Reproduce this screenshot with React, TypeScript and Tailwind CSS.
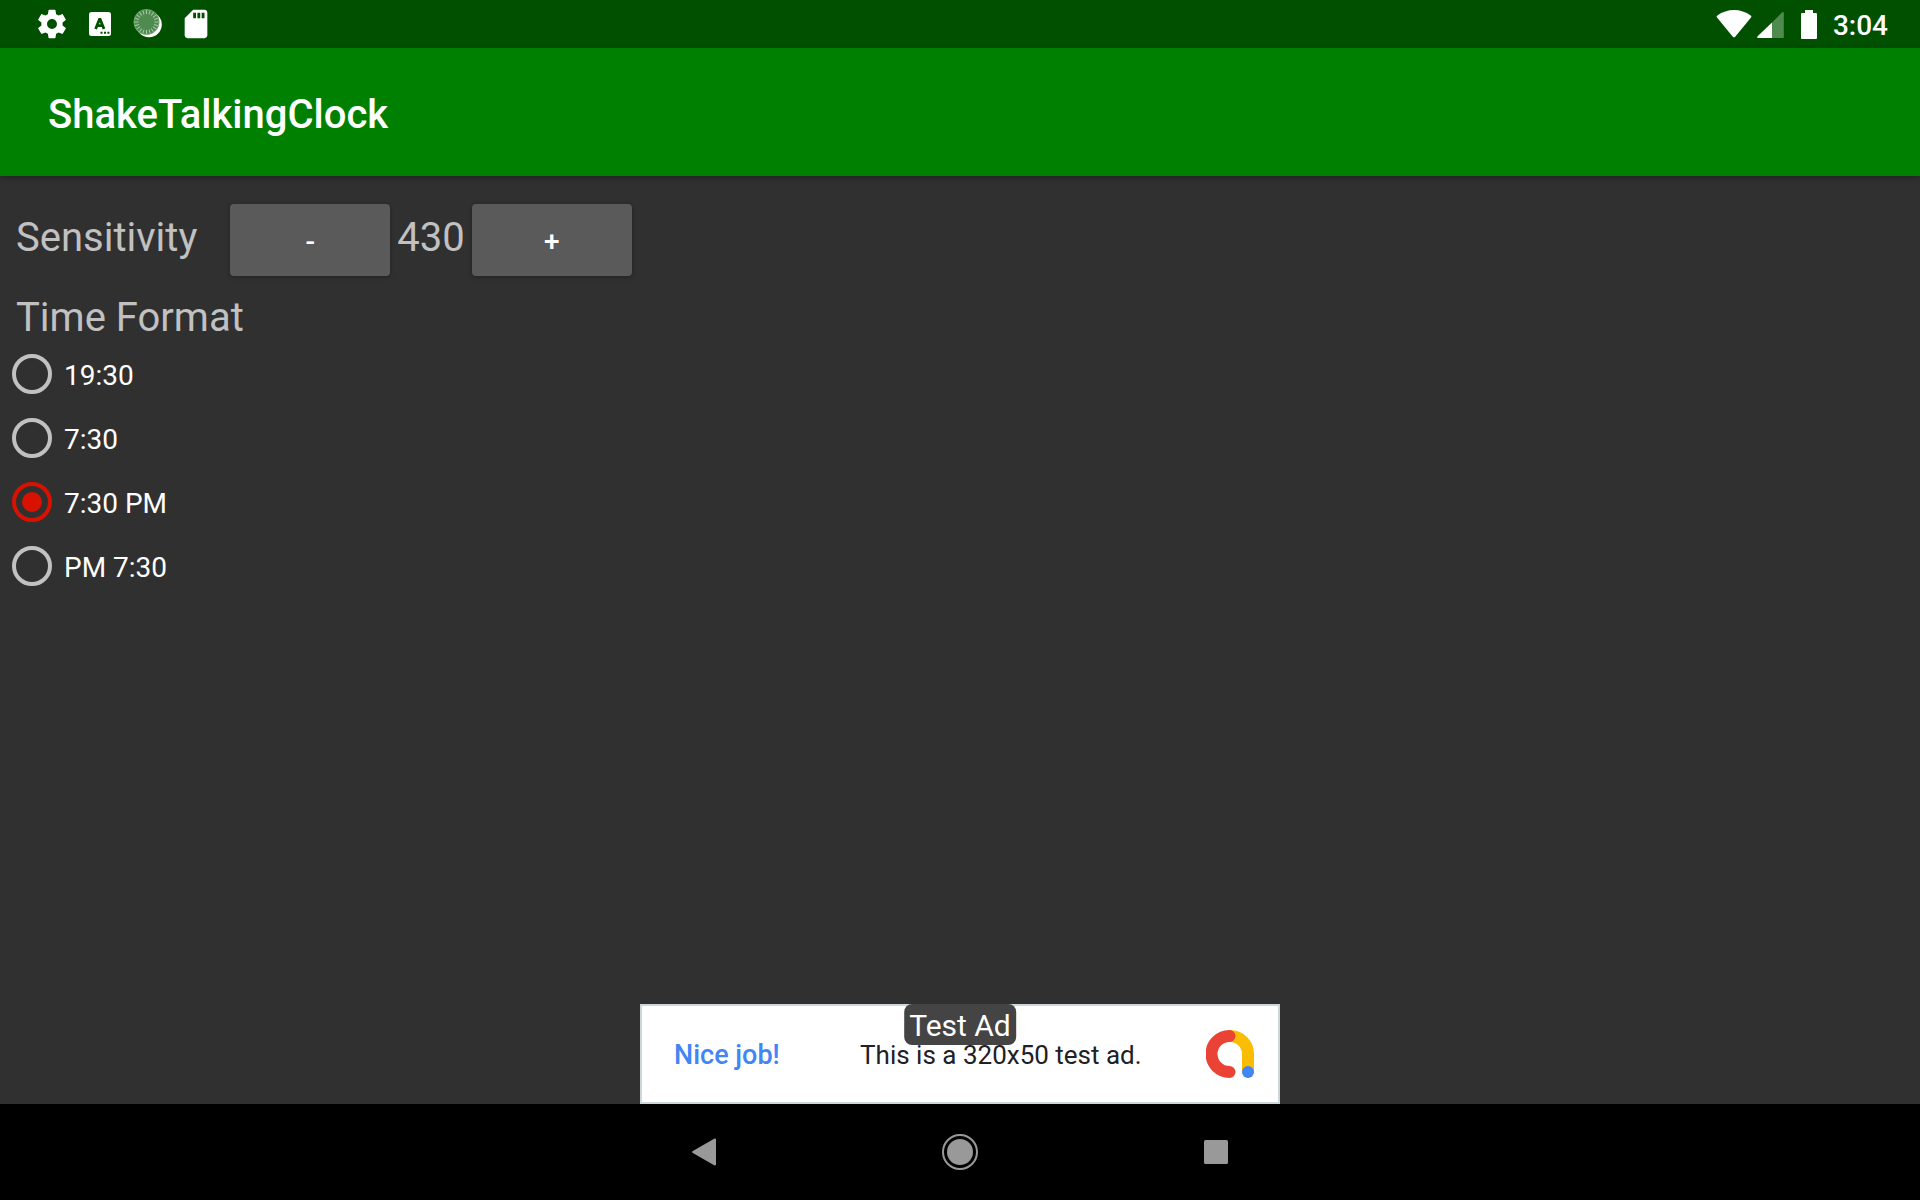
import React, { useState } from "react";

const MIN_SENSITIVITY = 0;
const SENSITIVITY_STEP = 10;

const timeFormats = ["19:30", "7:30", "7:30 PM", "PM 7:30"];

// Tick marks around the sync spinner
const spokes = Array.from({ length: 20 }, (_, i) => i * 18);

const StatusBar = () => (
  <header className="flex h-12 items-center justify-between bg-[#005000] pr-8 pl-[35px] text-white">
    <div className="flex items-center gap-[14px]">
      <svg className="size-[34px]" viewBox="0 0 24 24" fill="currentColor" aria-hidden="true">
        <path d="M19.43 12.98c.04-.32.07-.64.07-.98s-.03-.66-.07-.98l2.11-1.65c.19-.15.24-.42.12-.64l-2-3.46c-.12-.22-.39-.3-.61-.22l-2.49 1c-.52-.4-1.08-.73-1.69-.98l-.38-2.65C14.46 2.18 14.25 2 14 2h-4c-.25 0-.46.18-.49.42l-.38 2.65c-.61.25-1.17.59-1.69.98l-2.49-1c-.23-.09-.49 0-.61.22l-2 3.46c-.13.22-.07.49.12.64l2.11 1.65c-.04.32-.07.65-.07.98s.03.66.07.98l-2.11 1.65c-.19.15-.24.42-.12.64l2 3.46c.12.22.39.3.61.22l2.49-1c.52.4 1.08.73 1.69.98l.38 2.65c.03.24.24.42.49.42h4c.25 0 .46-.18.49-.42l.38-2.65c.61-.25 1.17-.59 1.69-.98l2.49 1c.23.09.49 0 .61-.22l2-3.46c.12-.22.07-.49-.12-.64l-2.11-1.65zM12 15.5c-1.93 0-3.5-1.57-3.5-3.5s1.57-3.5 3.5-3.5 3.5 1.57 3.5 3.5-1.57 3.5-3.5 3.5z" />
      </svg>
      <svg className="size-[34px]" viewBox="0 0 34 34" aria-hidden="true">
        <rect x="6" y="5" width="22" height="24" rx="2.5" fill="currentColor" />
        <path
          d="M12.6 22 16.8 11.5 21 22M14.3 18.6h5"
          fill="none"
          stroke="#005000"
          strokeWidth="2.8"
          strokeLinejoin="bevel"
        />
        <path d="M17.5 24.8h2v2h-2zM21 24.8h2v2h-2zM24.4 24.8h2v2h-2z" fill="#005000" />
      </svg>
      <svg className="size-[34px]" viewBox="0 0 34 34" aria-hidden="true">
        <circle cx="18" cy="17.5" r="12.8" fill="#fff" />
        <circle cx="15.5" cy="15" r="12.8" fill="#4f8a4f" />
        {spokes.map((angle) => (
          <path
            key={angle}
            d="M15.5 3v4"
            stroke="#a9c9a9"
            strokeWidth="1"
            transform={`rotate(${angle} 15.5 15)`}
          />
        ))}
        <circle cx="15.5" cy="15" r="12.6" fill="none" stroke="#8fb88f" strokeWidth=".6" />
      </svg>
      <svg className="size-[34px]" viewBox="0 0 24 24" fill="currentColor" aria-hidden="true">
        <path d="M18 2h-8L4.02 8 4 20c0 1.1.9 2 2 2h12c1.1 0 2-.9 2-2V4c0-1.1-.9-2-2-2zm-6 6h-2V4h2v4zm3 0h-2V4h2v4zm3 0h-2V4h2v4z" />
      </svg>
    </div>

    <div className="flex items-center">
      <svg className="h-7 w-9" viewBox="0 0 36 28" fill="currentColor" aria-hidden="true">
        <path d="M18 27.3a1.6 1.6 0 0 0 1.2-.6L35 7.4c.6-.8.5-1.4-.3-2C29.8 2 24 0 18 0S6.2 2 1.3 5.4c-.8.6-.9 1.2-.3 2l15.8 19.3a1.6 1.6 0 0 0 1.2.6z" />
      </svg>
      <svg className="ml-1 h-7 w-7" viewBox="0 0 28 28" aria-hidden="true">
        <path d="M16 12.6V28H2.5c-1.3 0-1.7-1-.9-1.8z" fill="#fff" />
        <path d="M16 12.6 26 2.5c.9-.8 1.8-.4 1.8.6V27c0 .6-.4 1-1 1H16z" fill="#4f8a4f" />
      </svg>
      <svg className="ml-[17px] h-[29px] w-4" viewBox="0 0 16 29" fill="currentColor" aria-hidden="true">
        <path d="M4 0h8v3h3a1 1 0 0 1 1 1v24a1 1 0 0 1-1 1H1a1 1 0 0 1-1-1V4a1 1 0 0 1 1-1h3z" />
      </svg>
      <time className="pt-1 pl-4 text-[28px] leading-8 font-medium">3:04</time>
    </div>
  </header>
);

const stepButton =
  "h-[72px] w-40 rounded-[4px] bg-[#5a5a5b] pt-1 text-[28px] font-medium text-white shadow-[0_1px_4px_rgba(0,0,0,0.3)]";

const TestAd = () => (
  <aside className="relative mx-auto mt-auto flex h-[100px] w-[640px] items-center border-2 border-[#cfd6d9] bg-white pr-6 pl-8">
    <a href="#ad" className="pt-[2px] text-[27px] font-medium text-[#4285f4]">Nice job!</a>
    <p className="flex-1 pt-[2px] pl-4 text-center text-[26px] text-[#202124]">This is a 320x50 test ad.</p>
    <svg className="size-12" viewBox="0 0 48 48" fill="none" strokeWidth="12" strokeLinecap="round" aria-hidden="true">
      <path d="M24 6a18 18 0 0 1 18 18v17" stroke="#fbbc04" />
      <path d="M23.5 6a18 18 0 0 0 0 36" stroke="#ea4335" />
      <circle cx="42" cy="42" r="6" fill="#4285f4" />
    </svg>
    <span className="absolute -top-[2px] left-1/2 -translate-x-1/2 rounded-lg bg-[#444] px-[5px] pt-[2px] text-[30px] leading-[39px] whitespace-nowrap text-white">
      Test Ad
    </span>
  </aside>
);

const NavigationBar = () => (
  <nav className="flex h-24 items-center justify-center gap-40 bg-black text-[#999]">
    <button type="button" aria-label="Back" className="flex size-24 items-center justify-center">
      <svg className="h-7 w-6" viewBox="0 0 24 28" fill="currentColor">
        <path d="M22.2.7c.8-.5 1.8 0 1.8 1v24.6c0 1-1 1.5-1.8 1L.8 15c-.9-.5-.9-1.5 0-2z" />
      </svg>
    </button>
    <button type="button" aria-label="Home" className="flex size-24 items-center justify-center">
      <svg className="size-9" viewBox="0 0 36 36">
        <circle cx="18" cy="18" r="17" fill="none" stroke="currentColor" strokeWidth="2" />
        <circle cx="18" cy="18" r="13" fill="currentColor" />
      </svg>
    </button>
    <button type="button" aria-label="Overview" className="flex size-24 items-center justify-center">
      <svg className="size-6" viewBox="0 0 24 24" fill="currentColor">
        <rect width="24" height="24" rx="1.5" />
      </svg>
    </button>
  </nav>
);

const App: React.FC = () => {
  const [sensitivity, setSensitivity] = useState(430);
  const [format, setFormat] = useState("7:30 PM");

  return (
    <div className="flex min-h-screen flex-col bg-[#303030] font-[Roboto,sans-serif]">
      <StatusBar />

      {/* App bar */}
      <div className="z-10 flex h-32 items-center bg-[#008000] px-12 pt-[6px] shadow-[0_2px_6px_rgba(0,0,0,0.3)]">
        <h1 className="text-[40px] font-medium text-white">ShakeTalkingClock</h1>
      </div>

      <main className="flex flex-1 flex-col pt-7">
        <div className="flex items-center px-4 text-[40px] text-[#c1c1c1]">
          <span className="pr-[33px] pb-1">Sensitivity</span>
          <button
            type="button"
            aria-label="Decrease sensitivity"
            className={stepButton}
            onClick={() => setSensitivity(Math.max(MIN_SENSITIVITY, sensitivity - SENSITIVITY_STEP))}
          >
            -
          </button>
          <output className="px-[7px] pb-1">{sensitivity}</output>
          <button
            type="button"
            aria-label="Increase sensitivity"
            className={stepButton}
            onClick={() => setSensitivity(sensitivity + SENSITIVITY_STEP)}
          >
            +
          </button>
        </div>

        <fieldset className="mt-[18px]">
          <legend className="px-4 text-[40px] leading-12 text-[#c1c1c1]">Time Format</legend>
          {timeFormats.map((label) => (
            <label key={label} className="flex h-16 w-fit items-center gap-3 pl-3 text-[28px] text-white">
              <input
                type="radio"
                name="time-format"
                value={label}
                checked={format === label}
                onChange={() => setFormat(label)}
                className="grid size-10 appearance-none place-items-center rounded-full border-4 border-[#c1c1c1] before:size-5 before:rounded-full checked:border-[#d81200] checked:before:bg-[#d81200]"
              />
              <span className="pt-1">{label}</span>
            </label>
          ))}
        </fieldset>

        <TestAd />
      </main>

      <NavigationBar />
    </div>
  );
};

export default App;
